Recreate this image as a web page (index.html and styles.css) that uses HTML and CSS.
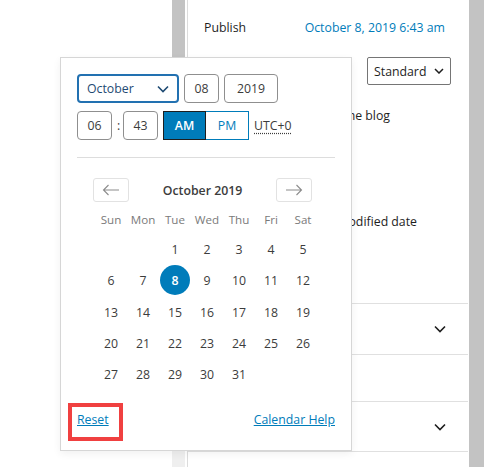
FILE: index.html
```html
<!DOCTYPE html>
<html lang="en">

<head>
    <meta charset="UTF-8">
    <title>Publish date</title>
    <link rel="stylesheet" href="styles.css">
</head>

<body>
    <div class="screen">
        <div class="canvas"></div>
        <div class="gutter"></div>

        <aside class="sidebar">
            <div class="row publish">
                <span>Publish</span>
                <a class="date-link">October 8, 2019 6:43 am</a>
            </div>
            <div class="row format">
                <span>Post Format</span>
                <div class="select">
                    Standard
                    <svg width="10" height="6" viewBox="0 0 10 6"><path d="M1 1l4 4 4-4" fill="none" stroke="#1e1e1e" stroke-width="1.5"/></svg>
                </div>
            </div>
            <div class="row check sticky">Stick to the top of the blog</div>
            <div class="row check pending"></div>
            <div class="row check modified">Show modified date</div>
            <div class="spacer"></div>
            <div class="panel p1">
                <svg width="12" height="8" viewBox="0 0 12 8"><path d="M1 1.5l5 5 5-5" fill="none" stroke="#1e1e1e" stroke-width="1.6"/></svg>
            </div>
            <div class="panel p2"></div>
            <div class="panel p3">
                <svg width="12" height="8" viewBox="0 0 12 8"><path d="M1 1.5l5 5 5-5" fill="none" stroke="#1e1e1e" stroke-width="1.6"/></svg>
            </div>
        </aside>

        <div class="scrollbar"></div>
    </div>

    <div class="popover">
        <div class="fields">
            <div class="month">
                <span>October</span>
                <svg width="12" height="8" viewBox="0 0 12 8"><path d="M1 1.5l5 5 5-5" fill="none" stroke="#1e4a73" stroke-width="1.6"/></svg>
            </div>
            <div class="box day">08</div>
            <div class="box year">2019</div>
        </div>
        <div class="fields">
            <div class="box hour">06</div>
            <span class="colon">:</span>
            <div class="box minute">43</div>
            <div class="ampm">
                <span class="am">AM</span>
                <span class="pm">PM</span>
            </div>
            <span class="tz">UTC+0</span>
        </div>

        <div class="divider"></div>

        <div class="cal-nav">
            <div class="nav-btn">
                <svg width="18" height="12" viewBox="0 0 18 12"><path d="M17 6H1.5M6.5 1L1.5 6l5 5" fill="none" stroke="#8c8c8c" stroke-width="1.1"/></svg>
            </div>
            <div class="cal-title">October 2019</div>
            <div class="nav-btn">
                <svg width="18" height="12" viewBox="0 0 18 12"><path d="M1 6h15.5M11.5 1l5 5-5 5" fill="none" stroke="#8c8c8c" stroke-width="1.1"/></svg>
            </div>
        </div>

        <div class="weekdays">
            <span>Sun</span><span>Mon</span><span>Tue</span><span>Wed</span><span>Thu</span><span>Fri</span><span>Sat</span>
        </div>

        <div class="days">
            <span></span><span></span>
            <span>1</span><span>2</span><span>3</span><span>4</span><span>5</span>
            <span>6</span><span>7</span><span class="selected">8</span><span>9</span><span>10</span><span>11</span><span>12</span>
            <span>13</span><span>14</span><span>15</span><span>16</span><span>17</span><span>18</span><span>19</span>
            <span>20</span><span>21</span><span>22</span><span>23</span><span>24</span><span>25</span><span>26</span>
            <span>27</span><span>28</span><span>29</span><span>30</span><span>31</span>
        </div>

        <div class="footer">
            <a class="reset">Reset</a>
            <a>Calendar Help</a>
        </div>
    </div>
</body>

</html>
```

FILE: styles.css
```css
html,
body {
    margin: 0;
    width: 484px;
    height: 467px;
    overflow: hidden;
    background: #fff;
    font-family: "Open Sans", "Noto Sans", sans-serif;
    font-size: 12.3px;
    color: #1e1e1e;
}

body {
    position: relative;
}

.screen {
    display: flex;
    height: 467px;
}

.canvas {
    width: 172px;
    background: #fff;
}

.gutter {
    width: 13px;
    background: linear-gradient(#c3c3c3 450px, #efefef 450px);
}

.sidebar {
    width: 280px;
    margin-left: 2px;
    border-left: 1px solid #dcdcdc;
    display: flex;
    flex-flow: column;
}

.scrollbar {
    width: 15px;
    margin-left: 1px;
    background: #c3c3c3;
}

.row {
    display: flex;
    align-items: center;
    justify-content: space-between;
    padding: 0 17px 0 16px;
}

.publish {
    height: 54px;
}

.date-link {
    color: #007cba;
    margin-right: 6px;
}

.format {
    height: 34px;
}

.select {
    height: 26px;
    width: 70px;
    padding: 0 6px;
    border: 1px solid #757575;
    border-radius: 2px;
    display: flex;
    align-items: center;
    justify-content: space-between;
}

.check {
    justify-content: flex-end;
    white-space: nowrap;
}

.sticky {
    height: 54px;
    padding-right: 78px;
}

.pending {
    height: 52px;
}

.modified {
    height: 54px;
    padding-right: 51px;
}

.spacer {
    height: 55px;
}

.panel {
    border-top: 1px solid #e0e0e0;
    display: flex;
    align-items: center;
    justify-content: flex-end;
    padding-right: 22px;
}

.p1 {
    height: 50px;
}

.p2 {
    height: 46px;
}

.p3 {
    height: 49px;
    border-bottom: 1px solid #e0e0e0;
}

/* date picker popover */
.popover {
    position: absolute;
    left: 60px;
    top: 57px;
    width: 258px;
    height: 360px;
    padding: 16px;
    background: #fff;
    border: 1px solid #d6d6d6;
    box-shadow: 0 3px 8px rgba(0, 0, 0, 0.06);
}

.fields {
    display: flex;
    align-items: center;
    gap: 5px;
    margin-bottom: 8px;
}

.month {
    box-sizing: border-box;
    width: 102px;
    height: 29px;
    padding: 0 8px;
    border: 2px solid #2271b1;
    border-radius: 4px;
    color: #1e4a73;
    display: flex;
    align-items: center;
    justify-content: space-between;
}

.box {
    box-sizing: border-box;
    height: 29px;
    border: 1px solid #8f8f8f;
    border-radius: 4px;
    display: flex;
    align-items: center;
    justify-content: center;
    color: #3c3c3c;
}

.day,
.hour,
.minute {
    width: 35px;
}

.year {
    width: 54px;
}

.colon {
    width: 1px;
    color: #3c3c3c;
}

.ampm {
    display: flex;
    height: 29px;
}

.ampm span {
    box-sizing: border-box;
    width: 43px;
    display: flex;
    align-items: center;
    justify-content: center;
}

.am {
    background: #007cba;
    color: #fff;
    font-weight: 600;
    border: 1px solid #1e1e1e;
}

.pm {
    color: #007cba;
    border: 1px solid #007cba;
    border-left: none;
}

.tz {
    color: #3c3c3c;
    text-decoration: underline dotted;
    text-underline-offset: 3px;
}

.divider {
    height: 1px;
    background: #dddddd;
    margin: 17px 0 20px;
}

.cal-nav {
    display: flex;
    align-items: center;
    justify-content: space-between;
    padding: 0 23px 0 16px;
}

.nav-btn {
    width: 34px;
    height: 22px;
    border: 1px solid #e2e2e2;
    border-radius: 3px;
    display: flex;
    align-items: center;
    justify-content: center;
}

.cal-title {
    font-weight: 600;
    color: #3c3c3c;
}

.weekdays,
.days {
    display: grid;
    grid-template-columns: repeat(7, 32px);
    margin-left: 18px;
    text-align: center;
}

.weekdays {
    margin-top: 9px;
    height: 18px;
    line-height: 18px;
    font-size: 11.6px;
    color: #7a7a7a;
}

.days {
    margin-top: 5px;
    grid-auto-rows: 31.25px;
    color: #3c3c3c;
}

.days span {
    display: flex;
    align-items: center;
    justify-content: center;
}

.days .selected {
    width: 30px;
    height: 30px;
    margin: 0 auto;
    border-radius: 50%;
    background: #007cba;
    color: #fff;
    font-weight: 600;
}

.footer {
    display: flex;
    justify-content: space-between;
    margin-top: 21px;
}

.footer a {
    color: #007cba;
    text-decoration: underline;
}

/* annotation box */
.reset {
    position: relative;
}

.reset::after {
    content: "";
    position: absolute;
    left: -9px;
    top: -8px;
    width: 47px;
    height: 30px;
    border: 4px solid #f04040;
}
```
